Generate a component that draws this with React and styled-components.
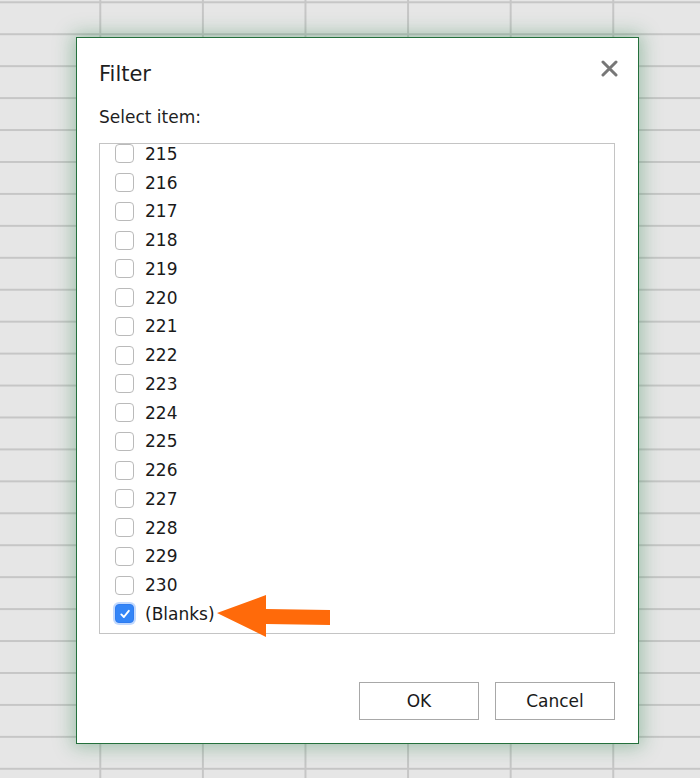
import styled, { createGlobalStyle } from "styled-components";

const items = [];
for (let n = 215; n <= 230; n++) items.push(String(n));

const GlobalStyle = createGlobalStyle`
  html, body {
    margin: 0;
    padding: 0;
    height: 100%;
  }
  body {
    font-family: "DejaVu Sans", Verdana, sans-serif;
    color: #222;
    background-color: #e6e6e6;
    background-image:
      linear-gradient(to right, #c6c6c6 2px, transparent 2px),
      linear-gradient(to bottom, #c6c6c6 2px, transparent 2px);
    background-size: 102.6px 31.95px;
    background-position: -3.3px 1.3px;
  }
`;

const Page = styled.div`
  min-height: 100vh;
  display: flex;
  align-items: flex-start;
  padding: 37px 0 0 76px;
  box-sizing: border-box;
`;

const Dialog = styled.div`
  width: 563px;
  height: 707px;
  box-sizing: border-box;
  background: #fff;
  border: 1px solid #24703c;
  box-shadow: 0 0 18px 3px rgba(40, 130, 70, 0.38);
  padding: 0 23px 23px 22px;
  display: flex;
  flex-direction: column;
`;

const Header = styled.div`
  display: flex;
  align-items: center;
  justify-content: space-between;
  margin-top: 22px;
  height: 28px;
`;

const Title = styled.h1`
  margin: 0;
  font-size: 21px;
  font-weight: normal;
  line-height: 28px;
  color: #1e1e1e;
`;

const CloseButton = styled.button`
  border: none;
  background: none;
  padding: 0;
  width: 18px;
  height: 18px;
  margin: -12px -3px 0 0;
  display: flex;
  align-items: center;
  justify-content: center;
  cursor: pointer;
`;

const Label = styled.div`
  margin-top: 19px;
  font-size: 17px;
  line-height: 20px;
  color: #1e1e1e;
`;

const ListWrap = styled.div`
  position: relative;
  margin-top: 16px;
  flex: 1;
  display: flex;
`;

const ListBox = styled.div`
  flex: 1;
  border: 1px solid #c4c4c4;
  overflow: hidden;
`;

const Rows = styled.div`
  margin-top: -4.4px;
`;

const Row = styled.label`
  display: flex;
  align-items: center;
  gap: 11px;
  height: 28.75px;
  padding-left: 15px;
  font-size: 17px;
  color: #1a1a1a;
`;

const Box = styled.span`
  width: 19px;
  height: 19px;
  box-sizing: border-box;
  border-radius: 4px;
  border: 1px solid ${(p) => (p.checked ? "#2f7cf0" : "#bababa")};
  background: ${(p) => (p.checked ? "#3385f7" : "#fff")};
  box-shadow: ${(p) =>
    p.checked ? "0 0 0 2px rgba(80, 145, 250, 0.35)" : "none"};
  display: flex;
  align-items: center;
  justify-content: center;
`;

const Arrow = styled.svg`
  position: absolute;
  left: 117px;
  top: 451px;
`;

const Footer = styled.div`
  margin-top: 48px;
  display: flex;
  justify-content: flex-end;
  gap: 16px;
`;

const Button = styled.button`
  width: 120px;
  height: 38px;
  background: #fff;
  border: 1px solid #a8a8a8;
  font-family: "DejaVu Sans", Verdana, sans-serif;
  font-size: 17px;
  color: #1a1a1a;
  padding: 0;
  cursor: pointer;
`;

const Check = () => (
  <svg width="12" height="12" viewBox="0 0 12 12">
    <path
      d="M2.3 6.4 L4.9 9 L9.8 2.8"
      fill="none"
      stroke="#fff"
      strokeWidth="1.9"
      strokeLinecap="round"
      strokeLinejoin="round"
    />
  </svg>
);

const App = () => {
  return (
    <Page>
      <GlobalStyle />
      <Dialog>
        <Header>
          <Title>Filter</Title>
          <CloseButton aria-label="Close">
            <svg width="17" height="17" viewBox="0 0 17 17">
              <path
                d="M2 2 L15 15 M15 2 L2 15"
                stroke="#777"
                strokeWidth="3"
                strokeLinecap="round"
              />
            </svg>
          </CloseButton>
        </Header>
        <Label>Select item:</Label>
        <ListWrap>
          <ListBox>
            <Rows>
              {items.map((n) => (
                <Row key={n}>
                  <Box />
                  {n}
                </Row>
              ))}
              <Row>
                <Box checked>
                  <Check />
                </Box>
                (Blanks)
              </Row>
            </Rows>
          </ListBox>
          <Arrow width="116" height="44" viewBox="0 0 116 44">
            <polygon
              points="1,19 50,1 50,15 114,16 114,31 50,30 50,43"
              fill="#ff6a0a"
            />
          </Arrow>
        </ListWrap>
        <Footer>
          <Button>OK</Button>
          <Button>Cancel</Button>
        </Footer>
      </Dialog>
    </Page>
  );
};

export default App;
